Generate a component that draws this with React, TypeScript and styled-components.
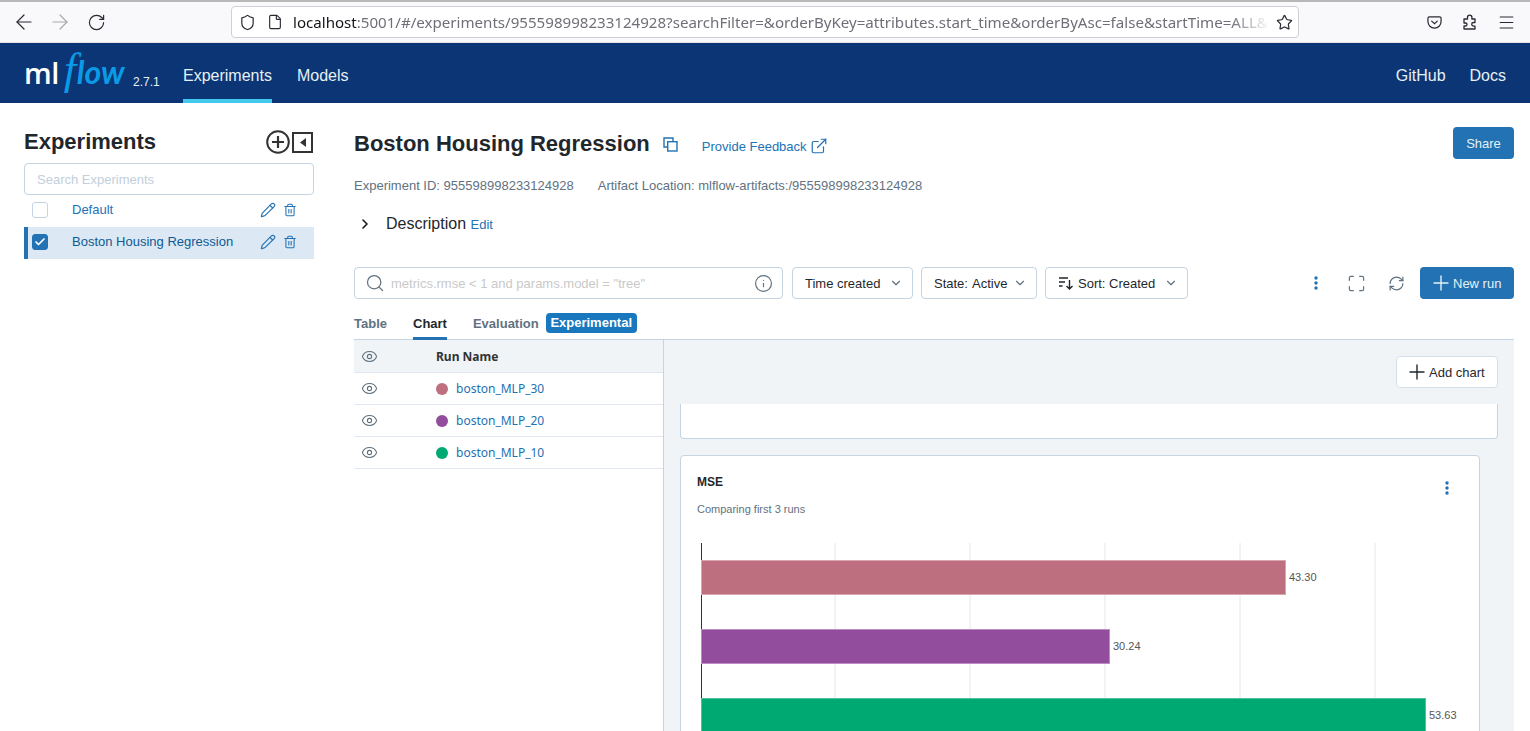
import React from 'react';
import styled, { createGlobalStyle } from 'styled-components';
import { ArrowLeft, ArrowRight, RotateCw, Shield, File, Star, Menu, ExternalLink, ChevronRight, ChevronDown, Search, Info, Plus, Maximize, RefreshCw, Eye, Pencil, Trash2, Check } from 'lucide-react';

const Global = createGlobalStyle`
  html, body { margin: 0; padding: 0; height: 100%; background: #fff; overflow: hidden; }
  #root { height: 100%; }
  * { box-sizing: border-box; }
  body { font-family: "Liberation Sans", Arial, sans-serif; font-size: 13px; color: #11171c; }
`;

const Page = styled.div`display: flex; flex-direction: column; height: 731px; overflow: hidden;`;

const BrowserBar = styled.div`
  height: 43px; flex: none; background: #f9f9fb; border-top: 2px solid #b8b8b8;
  display: flex; align-items: center; padding: 0; border-bottom: 1px solid #e4e4e6;
`;
const ToolBtn = styled.span<{ $w?: number; $c?: string; $first?: boolean }>`
  width: ${p => p.$w ?? 36}px; flex: none; display: flex; justify-content: center; align-items: center; color: ${p => p.$c ?? '#2b2a33'};
  margin-left: ${p => (p.$first ? 12 : 0)}px;
`;
const UrlBox = styled.div`
  width: 1068px; height: 32px; margin-left: 123px; flex: none; background: #fff; border: 1px solid #cfcfd8; border-radius: 4px;
  display: flex; align-items: center; padding-left: 1px;
`;
const UrlIcon = styled.span`width: 28px; flex: none; display: flex; justify-content: center; color: #2b2a33;`;
const UrlText = styled.div`
  flex: 1; min-width: 0; overflow: hidden; white-space: nowrap; font-family: "Noto Sans", sans-serif; font-size: 15.1px; margin-left: 4px;
  color: #6f6f78; -webkit-mask-image: linear-gradient(to right, #000 96%, transparent 100%);
  b { font-weight: 400; color: #15141a; }
`;
const RightTools = styled.div`margin-left: 117px; display: flex;`;

const Nav = styled.div`
  height: 60px; flex: none; background: #0b3574; display: flex; align-items: stretch; padding: 0 24px; color: #e6f1f5; font-size: 16px;
`;
const Logo = styled.div`
  width: 104px; flex: none; margin-right: 5px; display: flex; align-items: baseline; padding-top: 4px; line-height: 44px;
  font-family: "Open Sans", sans-serif; font-size: 29px; color: #fff; font-weight: 600; letter-spacing: -0.5px;
`;
const LogoF = styled.span`
  font-family: "Liberation Serif", serif; font-style: italic; font-weight: 400; color: #0a9ae6; font-size: 45px; margin: 0 1px 0 5px; line-height: 44px;
`;
const LogoOw = styled.span`font-family: "Lato", sans-serif; font-style: italic; font-weight: 700; color: #0a9ae6; font-size: 32px; letter-spacing: 0;`;
const Version = styled.span`align-self: center; margin: 18px 23px 0 0; font-size: 12px; width: 27px; flex: none; color: #e6f1f5;`;
const NavItem = styled.div<{ $active?: boolean }>`
  display: flex; align-items: center; padding: 10px 0 0; margin-right: 25px;
  border-bottom: 4px solid ${p => (p.$active ? '#43c9ed' : 'transparent')}; height: 60px;
`;
const NavSpacer = styled.div`flex: 1;`;
const NavRight = styled.div`display: flex; align-items: center; padding-top: 5px; margin-left: 24px;`;

const Body = styled.div`flex: 1; min-height: 0; display: flex; padding-left: 24px;`;
const Sidebar = styled.div`width: 290px; flex: none; padding-top: 24px;`;
const SideHead = styled.div`display: flex; align-items: center; justify-content: space-between; height: 30px; margin-bottom: 6px;`;
const SideTitle = styled.h1`font-size: 22px; font-weight: 700; margin: 0; color: #1f272d;`;
const SideIcons = styled.div`display: flex; align-items: center; gap: 2px; margin-right: 1px; color: #333;`;
const SideSearch = styled.div`
  height: 32px; border: 1px solid #c4d4e3; border-radius: 4px; padding: 0 12px; display: flex; align-items: center; color: #c2cfdb; font-size: 13px;
`;
const ExpRow = styled.div<{ $sel?: boolean }>`
  height: 32px; display: flex; align-items: center; color: ${p => (p.$sel ? '#0e5a93' : '#2272b4')};
  background: ${p => (p.$sel ? '#dce8f3' : 'transparent')};
  border-left: 4px solid ${p => (p.$sel ? '#2272b4' : 'transparent')};
  padding: 0 0 2px 4px; font-size: 13px;
`;
const Box = styled.span<{ $on?: boolean }>`
  width: 16px; height: 16px; flex: none; border-radius: 3px; margin-right: 24px; display: flex; align-items: center; justify-content: center;
  border: 1px solid ${p => (p.$on ? '#2272b4' : '#c4d4e3')}; background: ${p => (p.$on ? '#2272b4' : '#fff')}; color: #fff;
`;
const ExpName = styled.span`flex: 1; margin-bottom: 2px;`;
const ExpIcons = styled.span`display: flex; align-items: center; gap: 7px; margin-right: 17px; color: #2272b4;`;

const Main = styled.div`width: 1160px; margin-left: 40px; flex: none; display: flex; flex-direction: column; min-height: 0;`;
const TitleRow = styled.div`display: flex; align-items: center; height: 32px; margin-top: 24px;`;
const Title = styled.h2`font-size: 22px; font-weight: 700; margin: 2px 13px 0 0; color: #1f272d;`;
const Blue = styled.span`color: #2272b4; display: inline-flex; align-items: center; margin-top: 3px;`;
const Feedback = styled.a`color: #2272b4; font-size: 13px; margin-left: 24px; margin-top: 6px; display: flex; align-items: center; gap: 3px;`;
const Share = styled.button`
  margin-left: auto; width: 61px; height: 32px; background: #2272b4; border: 0; border-radius: 4px; color: #e6f1f5; font: 13px "Liberation Sans", sans-serif;
`;
const Meta = styled.div`margin-top: 18px; height: 18px; line-height: 18px; color: #5f7281; font-size: 13px; display: flex; gap: 24px;`;
const DescRow = styled.div`display: flex; align-items: center; height: 24px; margin-top: 17px; color: #1f272d;`;
const DescChevron = styled.span`width: 32px; padding-left: 3px; flex: none; display: flex; color: #11171c;`;
const DescLabel = styled.span`font-size: 16px; margin-right: 4.500px;`;
const EditLink = styled.span`color: #2272b4; font-size: 13px; margin-top: 1px;`;

const Toolbar = styled.div`display: flex; align-items: center; height: 32px; margin-top: 31px;`;
const FilterInput = styled.div`
  width: 429px; height: 32px; flex: none; border: 1px solid #c4d4e3; border-radius: 4px; display: flex; align-items: center; padding: 0 9px 0 10px; color: #c9c9c9; font-size: 13px; margin-right: 9px;
`;
const FilterText = styled.span`flex: 1; margin-left: 6px;`;
const Select = styled.div<{ $w: number }>`
  width: ${p => p.$w}px; height: 32px; flex: none; border: 1px solid #c4d4e3; border-radius: 4px; display: flex; align-items: center; justify-content: space-between; padding: 0 9px 0 12px; color: #1f272d; font-size: 13px; margin-right: 8px;
`;
const SelectLabel = styled.span<{ $gap?: number }>`display: inline-flex; align-items: center; gap: ${p => p.$gap ?? 4}px;`;
const ToolIcons = styled.div`margin-left: auto; display: flex; align-items: center; margin-right: 4px;`;
const ToolIcon = styled.span<{ $c?: string }>`width: 40px; display: flex; justify-content: center; color: ${p => p.$c ?? '#5f7281'};`;
const NewRun = styled.button`
  width: 94px; height: 32px; flex: none; background: #2272b4; border: 0; border-radius: 4px; color: #e6f1f5; font: 13px "Liberation Sans", sans-serif; display: flex; align-items: center; padding: 0 0 0 9px;
`;

const Tabs = styled.div`display: flex; align-items: flex-end; height: 41px; border-bottom: 1px solid #c4d4e3; flex: none;`;
const Tab = styled.div<{ $active?: boolean; $gap: number }>`
  height: 25px; margin-right: ${p => p.$gap}px; margin-bottom: -1px; font-weight: 700; font-size: 13px; display: flex; align-items: flex-start; padding-top: 1px;
  color: ${p => (p.$active ? '#1f272d' : '#5f7281')};
  border-bottom: 3px solid ${p => (p.$active ? '#2272b4' : 'transparent')};
`;
const Badge = styled.span`
  background: #1877bd; color: #fff; border-radius: 4px; font-weight: 700; font-size: 13px; height: 20px; line-height: 20px; padding: 0 4px; align-self: flex-start; margin: 14px 0 0 0; width: 91px; text-align: center;
`;

const Runs = styled.div`flex: 1; min-height: 0; display: flex;`;
const RunTable = styled.div`width: 310px; flex: none; border-right: 1px solid #c4d4e3;`;
const RunRow = styled.div<{ $head?: boolean }>`
  height: ${p => (p.$head ? 33 : 32)}px; display: flex; align-items: center; border-bottom: 1px solid #e1e7ee; background: ${p => (p.$head ? '#f1f4f7' : '#fff')};
  font-family: "Noto Sans", sans-serif; font-size: 12px; color: #2272b4;
`;
const EyeCell = styled.span`width: 82px; padding-left: 7px; flex: none; display: flex; color: #5f7281;`;
const HeadName = styled.span`font-weight: 700; color: #333; font-size: 12px;`;
const Dot = styled.span<{ $c: string }>`width: 12px; height: 12px; border-radius: 50%; background: ${p => p.$c}; margin-right: 8px; flex: none;`;

const ChartPanel = styled.div`flex: 1; min-width: 0; background: #f1f4f7; padding: 16px 16px 0 16px; display: flex; flex-direction: column; overflow: hidden;`;
const AddRow = styled.div`display: flex; justify-content: flex-end; flex: none; margin-bottom: 16px;`;
const AddChart = styled.button`
  width: 102px; height: 32px; background: #fff; border: 1px solid #d3dfea; border-radius: 4px; color: #1f272d; font: 13px "Liberation Sans", sans-serif; display: flex; align-items: center; padding: 0 0 0 8px;
`;
const ClippedCard = styled.div`height: 35px; flex: none; background: #fff; border: 1px solid #c4d4e3; border-top: 0; border-radius: 0 0 4px 4px;`;
const ChartCard = styled.div`
  width: 800px; flex: 1 0 auto; margin-top: 16px; background: #fff; border: 1px solid #c4d4e3; border-radius: 4px 4px 0 0; padding: 16px 16px 0; position: relative; height: 300px;
`;
const ChartTitle = styled.div`font-weight: 700; font-size: 12px; color: #1f272d; height: 20px; line-height: 20px;`;
const ChartSub = styled.div`font-size: 11px; color: #5f7281; height: 16px; line-height: 16px; margin-top: 9px;`;
const Kebab = styled.span`position: absolute; top: 24px; right: 24px; display: flex; color: #2272b4;`;
const ChartSvg = styled.svg`display: block; margin-top: 26px; overflow: hidden;`;

const Dots = ({ size = 16 }: { size?: number }) => (
  <svg width={size} height={size} viewBox="0 0 16 16" fill="currentColor"><circle cx="8" cy="3" r="1.7" /><circle cx="8" cy="8" r="1.7" /><circle cx="8" cy="13" r="1.7" /></svg>
);
const Pocket = () => (
  <svg width="15" height="15" viewBox="0 0 16 16" fill="none" stroke="#2b2a33" strokeWidth="1.300"><path d="M2.500 2h11a1.500 1.500 0 0 1 1.500 1.500V7a7 7 0 0 1-14 0V3.500A1.500 1.500 0 0 1 2.500 2z" /><path d="M5 6.500l3 2.800 3-2.800" strokeLinecap="round" /></svg>
);
const PuzzlePiece = () => (
  <svg width="16" height="16" viewBox="0 0 16 16" fill="none" stroke="#2b2a33" strokeWidth="1.300" strokeLinejoin="round"><path d="M2 5h3.500V3.300a2.200 2.200 0 0 1 4.400 0V5H13v3.500h-1.500a1.800 1.800 0 0 0 0 3.600H13V15H2v-3h1.500a1.500 1.500 0 0 0 0-3H2z" /></svg>
);
const PlusCircle = () => (
  <svg width="24" height="24" viewBox="0 0 24 24" fill="none" stroke="#333" strokeWidth="2"><circle cx="12" cy="12" r="10.800" /><path d="M12 6v12M6 12h12" strokeWidth="2.200" /></svg>
);
const Collapse = () => (
  <svg width="21" height="21" viewBox="0 0 21 21" fill="none"><rect x="1" y="1" width="19" height="19" stroke="#333" strokeWidth="2" /><path d="M14 6v9L8 10.500z" fill="#333" /></svg>
);
const CopyIcon = () => (
  <svg width="15" height="15" viewBox="0 0 15 15" fill="none" stroke="currentColor" strokeWidth="1.400"><path d="M10 4.500V1H1v9h3.500" /><rect x="4.700" y="4.700" width="9.300" height="9.300" /></svg>
);
const SortIcon = () => (
  <svg width="16" height="16" viewBox="0 0 16 16" fill="none" stroke="#1f272d" strokeWidth="1.400"><path d="M1 3h9M1 7h6M1 11h3.500M11.500 5v9M8.500 11l3 3 3-3" /></svg>
);

const bars = [
  { w: 584, y: 17, c: '#bd6e7f', s: '#d9a5b0', l: '43.30' },
  { w: 408, y: 86, c: '#924d9c', s: '#bd8cc4', l: '30.24' },
  { w: 724, y: 155, c: '#00a972', s: '#4dc39c', l: '53.63' },
];

export default function App() {
  return (
    <Page>
      <Global />
      <BrowserBar>
        <ToolBtn $first $w={24}><ArrowLeft size={24} strokeWidth={1.2} /></ToolBtn>
        <ToolBtn $w={48} $c="#a9a9ad"><ArrowRight size={24} strokeWidth={1.2} /></ToolBtn>
        <ToolBtn $w={24}><RotateCw size={19} strokeWidth={1.5} /></ToolBtn>
        <UrlBox>
          <UrlIcon><Shield size={17} strokeWidth={1.7} /></UrlIcon>
          <UrlIcon><File size={16} strokeWidth={1.7} /></UrlIcon>
          <UrlText><b>localhost</b>:5001/#/experiments/955598998233124928?searchFilter=&amp;orderByKey=attributes.start_time&amp;orderByAsc=false&amp;startTime=ALL&amp;</UrlText>
          <UrlIcon><Star size={17} strokeWidth={1.7} /></UrlIcon>
        </UrlBox>
        <RightTools>
          <ToolBtn><Pocket /></ToolBtn>
          <ToolBtn><PuzzlePiece /></ToolBtn>
          <ToolBtn><Menu size={19} strokeWidth={1.4} /></ToolBtn>
        </RightTools>
      </BrowserBar>
      <Nav>
        <Logo>ml<LogoF>f</LogoF><LogoOw>low</LogoOw></Logo>
        <Version>2.7.1</Version>
        <NavItem $active>Experiments</NavItem>
        <NavItem>Models</NavItem>
        <NavSpacer />
        <NavRight>GitHub</NavRight>
        <NavRight>Docs</NavRight>
      </Nav>
      <Body>
        <Sidebar>
          <SideHead>
            <SideTitle>Experiments</SideTitle>
            <SideIcons><PlusCircle /><Collapse /></SideIcons>
          </SideHead>
          <SideSearch>Search Experiments</SideSearch>
          <ExpRow>
            <Box />
            <ExpName>Default</ExpName>
            <ExpIcons><Pencil size={16} strokeWidth={1.7} /><Trash2 size={14} strokeWidth={1.8} /></ExpIcons>
          </ExpRow>
          <ExpRow $sel>
            <Box $on><Check size={12} strokeWidth={3.5} /></Box>
            <ExpName>Boston Housing Regression</ExpName>
            <ExpIcons><Pencil size={16} strokeWidth={1.7} /><Trash2 size={14} strokeWidth={1.8} /></ExpIcons>
          </ExpRow>
        </Sidebar>
        <Main>
          <TitleRow>
            <Title>Boston Housing Regression</Title>
            <Blue><CopyIcon /></Blue>
            <Feedback>Provide Feedback <ExternalLink size={18} strokeWidth={1.6} /></Feedback>
            <Share>Share</Share>
          </TitleRow>
          <Meta>
            <span>Experiment ID: 955598998233124928</span>
            <span>Artifact Location: mlflow-artifacts:/955598998233124928</span>
          </Meta>
          <DescRow>
            <DescChevron><ChevronRight size={16} strokeWidth={2.4} /></DescChevron>
            <DescLabel>Description</DescLabel>
            <EditLink>Edit</EditLink>
          </DescRow>
          <Toolbar>
            <FilterInput>
              <Search size={20} color="#5f7281" strokeWidth={1.5} />
              <FilterText>metrics.rmse &lt; 1 and params.model = "tree"</FilterText>
              <Info size={19} color="#5f7281" strokeWidth={1.5} />
            </FilterInput>
            <Select $w={121}>Time created <ChevronDown size={14} color="#5f7281" /></Select>
            <Select $w={116}><SelectLabel $gap={4}><span>State:</span><span>Active</span></SelectLabel> <ChevronDown size={14} color="#5f7281" /></Select>
            <Select $w={143}><SelectLabel><SortIcon />Sort: Created</SelectLabel> <ChevronDown size={14} color="#5f7281" /></Select>
            <ToolIcons>
              <ToolIcon $c="#2272b4"><Dots /></ToolIcon>
              <ToolIcon><Maximize size={19} strokeWidth={1.5} /></ToolIcon>
              <ToolIcon><RefreshCw size={17} strokeWidth={1.7} /></ToolIcon>
            </ToolIcons>
            <NewRun><Plus size={24} strokeWidth={1.4} />New run</NewRun>
          </Toolbar>
          <Tabs>
            <Tab $gap={26}>Table</Tab>
            <Tab $gap={26} $active>Chart</Tab>
            <Tab $gap={7}>Evaluation</Tab>
            <Badge>Experimental</Badge>
          </Tabs>
          <Runs>
            <RunTable>
              <RunRow $head><EyeCell><Eye size={17} strokeWidth={1.5} /></EyeCell><HeadName>Run Name</HeadName></RunRow>
              <RunRow><EyeCell><Eye size={17} strokeWidth={1.5} /></EyeCell><Dot $c="#bd6e7f" />boston_MLP_30</RunRow>
              <RunRow><EyeCell><Eye size={17} strokeWidth={1.5} /></EyeCell><Dot $c="#924d9c" />boston_MLP_20</RunRow>
              <RunRow><EyeCell><Eye size={17} strokeWidth={1.5} /></EyeCell><Dot $c="#00a972" />boston_MLP_10</RunRow>
            </RunTable>
            <ChartPanel>
              <AddRow><AddChart><Plus size={24} strokeWidth={1.4} />Add chart</AddChart></AddRow>
              <ClippedCard />
              <ChartCard>
                <ChartTitle>MSE</ChartTitle>
                <Kebab><Dots /></Kebab>
                <ChartSub>Comparing first 3 runs</ChartSub>
                <ChartSvg width="766" height="200" viewBox="0 0 766 200">
                  {[138, 273, 408, 543, 678].map(x => <line key={x} x1={x} x2={x} y1="0" y2="200" stroke="#e6e6e6" />)}
                  <line x1="4.500" x2="4.500" y1="0" y2="200" stroke="#333" />
                  {bars.map(b => (
                    <g key={b.l}>
                      <rect x="4.500" y={b.y + 0.5} width={b.w} height="34" fill={b.c} stroke={b.s} />
                      <text x={b.w + 8} y={b.y + 21} fontSize="11" fill="#555" fontFamily="Liberation Sans">{b.l}</text>
                    </g>
                  ))}
                </ChartSvg>
              </ChartCard>
            </ChartPanel>
          </Runs>
        </Main>
      </Body>
    </Page>
  );
}
